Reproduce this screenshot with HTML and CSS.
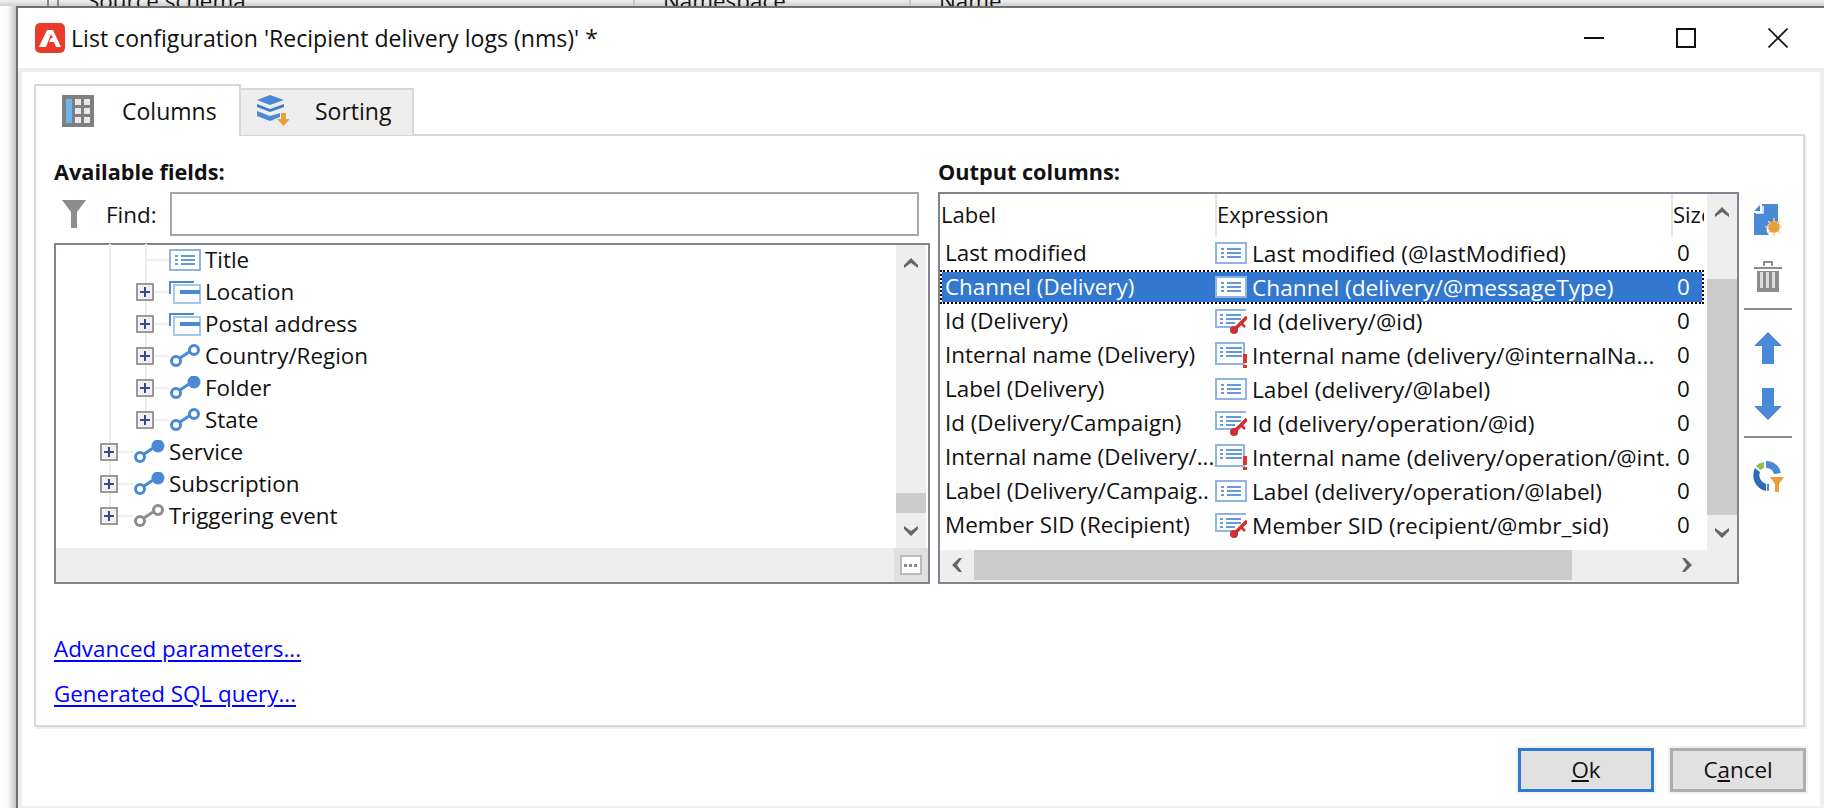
FILE: index.html
```html
<!DOCTYPE html>
<html lang="en">
<head>
  <meta charset="UTF-8">
  <title>List configuration</title>
  <link rel="stylesheet" href="styles.css">
</head>
<body>

  <svg class="defs" width="0" height="0">
    <symbol id="i-attr" viewBox="0 0 32 24">
      <rect x="1" y="2" width="30" height="20" fill="#fff" stroke="#8fb5e3" stroke-width="2"/>
      <path d="M6 8h3M12 8h14M6 12h3M12 12h14M6 16h3M12 16h14" stroke="#4a89d6" stroke-width="2" opacity=".85"/>
    </symbol>
    <symbol id="i-key" viewBox="0 0 32 26">
      <path d="M31 2H1v17h17" fill="none" stroke="#8fb5e3" stroke-width="2"/>
      <path d="M5 7h3M11 7h15M5 11h3M11 11h15M5 15h3M11 15h9" stroke="#4a89d6" stroke-width="2" opacity=".85"/>
      <path d="M32 9 20 21" stroke="#cf2f2f" stroke-width="3.500"/>
      <circle cx="19" cy="22" r="4" fill="#cf2f2f"/>
      <path d="M26 15l4 4" stroke="#cf2f2f" stroke-width="2.500"/>
    </symbol>
    <symbol id="i-warn" viewBox="0 0 32 26">
      <path d="M1 1h28v21H1z" fill="#fff" stroke="#8fb5e3" stroke-width="2"/>
      <path d="M5 6h3M11 6h16M5 10h3M11 10h16M5 14h3M11 14h16" stroke="#4a89d6" stroke-width="2" opacity=".85"/>
      <path d="M28 12h4v9h-4zM28 23h4v3h-4z" fill="#e0342c"/>
    </symbol>
    <symbol id="i-node" viewBox="0 0 32 24">
      <path d="M1 14V2h24" fill="none" stroke="#4a89d6" stroke-width="2"/>
      <rect x="5" y="5" width="26" height="18" fill="#fff" stroke="#a9c6ea" stroke-width="2"/>
      <path d="M11 12h20" stroke="#4a89d6" stroke-width="4"/>
    </symbol>
    <symbol id="i-link" viewBox="0 0 32 24">
      <circle cx="7" cy="17" r="4.500" fill="none" stroke="currentColor" stroke-width="3"/>
      <path d="M11 14l9-6" stroke="currentColor" stroke-width="3"/>
      <circle cx="25" cy="6" r="4.500" fill="none" stroke="currentColor" stroke-width="3"/>
    </symbol>
    <symbol id="i-link-full" viewBox="0 0 32 24">
      <circle cx="7" cy="17" r="4.500" fill="none" stroke="currentColor" stroke-width="3"/>
      <path d="M11 14l9-6" stroke="currentColor" stroke-width="3"/>
      <circle cx="25" cy="6" r="6.500" fill="currentColor"/>
    </symbol>
    <symbol id="i-plus" viewBox="0 0 18 18">
      <rect x="1" y="1" width="16" height="16" fill="#f1f1f1" stroke="#9a9a9a" stroke-width="2"/>
      <path d="M4 9h10M9 4v10" stroke="#34478a" stroke-width="2"/>
    </symbol>
    <symbol id="i-up" viewBox="0 0 14 12">
      <path d="M0 8 7 1l7 7v3l-7-5-7 5z" fill="#666"/>
    </symbol>
    <symbol id="i-down" viewBox="0 0 14 12">
      <path d="M0 1v3l7 7 7-7V1L7 6z" fill="#666"/>
    </symbol>
    <symbol id="i-left" viewBox="0 0 12 14">
      <path d="M8 0 1 7l7 7h3L6 7l5-7z" fill="#666"/>
    </symbol>
    <symbol id="i-right" viewBox="0 0 12 14">
      <path d="M1 0l5 7-5 7h3l7-7-7-7z" fill="#666"/>
    </symbol>
  </svg>

  <div class="behind">
    <span class="behind-cell narrow"></span>
    <span class="behind-cell source">Source schema</span>
    <span class="behind-cell space">Namespace</span>
    <span class="behind-cell last">Name</span>
  </div>

  <div class="dialog">
    <div class="titlebar">
      <svg class="logo" width="30" height="30" viewBox="0 0 30 30">
        <rect width="30" height="30" rx="5" fill="#e93a2a"/>
        <path d="M12 7h6l8 17h-5l-2-5h-5l2-4h2l-2-4-5 13H4z" fill="#fff"/>
      </svg>
      <span class="title">List configuration 'Recipient delivery logs (nms)' *</span>
      <div class="controls">
        <span class="control"><svg width="20" height="20" viewBox="0 0 20 20"><path d="M0 10h20" stroke="#111" stroke-width="2"/></svg></span>
        <span class="control"><svg width="20" height="20" viewBox="0 0 20 20"><rect x="1" y="1" width="18" height="18" fill="none" stroke="#111" stroke-width="2"/></svg></span>
        <span class="control"><svg width="20" height="20" viewBox="0 0 20 20"><path d="M.5.5l19 19M19.500.5l-19 19" stroke="#111" stroke-width="1.600"/></svg></span>
      </div>
    </div>

    <div class="dialog-body">
      <div class="tabs">
        <div class="tab active">
          <svg width="32" height="32" viewBox="0 0 32 32">
            <rect width="32" height="32" fill="#7f7f7f"/>
            <rect x="4" y="4" width="6" height="24" fill="#66b7ee"/>
            <path d="M13 4h6v6h-6zM22 4h6v6h-6zM13 13h6v6h-6zM22 13h6v6h-6zM13 22h6v6h-6zM22 22h6v6h-6z" fill="#e8e8e8"/>
          </svg>
          <span>Columns</span>
        </div>
        <div class="tab">
          <svg width="32" height="32" viewBox="0 0 32 32">
            <path d="M13 0l14 5-14 5L0 5z" fill="#4a89d6"/>
            <path d="M0 9l13 5 14-5v3l-14 5-13-5z" fill="#3d7cc9"/>
            <path d="M0 16l13 5 10-3v4l-10 4-13-5z" fill="#4a89d6"/>
            <path d="M24 18h5v6h4l-6.500 7L20 24h4z" fill="#e8a03c"/>
          </svg>
          <span>Sorting</span>
        </div>
      </div>

      <div class="pane">
        <div class="columns">
          <div class="fields">
            <div class="group-label">Available fields:</div>
            <div class="find-row">
              <svg width="24" height="28" viewBox="0 0 24 28"><path d="M0 0h24L15 12v16H9V12z" fill="#8c8c8c"/></svg>
              <label class="find-label">Find:</label>
              <div class="find-input"></div>
            </div>
            <div class="tree">
              <div class="tree-main">
                <div class="tree-rows">
                  <div class="tree-row lvl2 no-exp"><i class="stub"></i><svg class="node-icon"><use href="#i-attr"/></svg>Title</div>
                  <div class="tree-row lvl2"><svg class="plus"><use href="#i-plus"/></svg><i class="stub"></i><svg class="node-icon"><use href="#i-node"/></svg>Location</div>
                  <div class="tree-row lvl2"><svg class="plus"><use href="#i-plus"/></svg><i class="stub"></i><svg class="node-icon"><use href="#i-node"/></svg>Postal address</div>
                  <div class="tree-row lvl2"><svg class="plus"><use href="#i-plus"/></svg><i class="stub"></i><svg class="node-icon blue"><use href="#i-link"/></svg>Country/Region</div>
                  <div class="tree-row lvl2"><svg class="plus"><use href="#i-plus"/></svg><i class="stub"></i><svg class="node-icon blue"><use href="#i-link-full"/></svg>Folder</div>
                  <div class="tree-row lvl2 end"><svg class="plus"><use href="#i-plus"/></svg><i class="stub"></i><svg class="node-icon blue"><use href="#i-link"/></svg>State</div>
                  <div class="tree-row lvl1"><svg class="plus"><use href="#i-plus"/></svg><i class="stub"></i><svg class="node-icon blue"><use href="#i-link-full"/></svg>Service</div>
                  <div class="tree-row lvl1"><svg class="plus"><use href="#i-plus"/></svg><i class="stub"></i><svg class="node-icon blue"><use href="#i-link-full"/></svg>Subscription</div>
                  <div class="tree-row lvl1 end"><svg class="plus"><use href="#i-plus"/></svg><i class="stub"></i><svg class="node-icon gray"><use href="#i-link"/></svg>Triggering event</div>
                </div>
                <div class="vscroll tree-scroll">
                  <span class="arrow-cell"><svg width="14" height="12"><use href="#i-up"/></svg></span>
                  <div class="track end"><div class="thumb tree-thumb"></div></div>
                  <span class="arrow-cell"><svg width="14" height="12"><use href="#i-down"/></svg></span>
                </div>
              </div>
              <div class="tree-foot">
                <div class="corner"><span class="corner-box"></span></div>
              </div>
            </div>
          </div>

          <div class="outputs">
            <div class="group-label">Output columns:</div>
            <div class="grid-box">
              <div class="grid-main">
                <div class="grid-table">
                  <div class="grid-head">
                    <span class="hcell">Label</span>
                    <span class="hcell">Expression</span>
                    <span class="hcell clip">Size</span>
                  </div>
                  <div class="grid-row"><span class="c-label">Last modified</span><span class="c-expr"><svg class="row-icon"><use href="#i-attr"/></svg>Last modified (@lastModified)</span><span class="c-size">0</span></div>
                  <div class="grid-row selected"><span class="c-label">Channel (Delivery)</span><span class="c-expr"><svg class="row-icon"><use href="#i-attr"/></svg>Channel (delivery/@messageType)</span><span class="c-size">0</span></div>
                  <div class="grid-row"><span class="c-label">Id (Delivery)</span><span class="c-expr"><svg class="row-icon"><use href="#i-key"/></svg>Id (delivery/@id)</span><span class="c-size">0</span></div>
                  <div class="grid-row"><span class="c-label">Internal name (Delivery)</span><span class="c-expr"><svg class="row-icon"><use href="#i-warn"/></svg>Internal name (delivery/@internalNa...</span><span class="c-size">0</span></div>
                  <div class="grid-row"><span class="c-label">Label (Delivery)</span><span class="c-expr"><svg class="row-icon"><use href="#i-attr"/></svg>Label (delivery/@label)</span><span class="c-size">0</span></div>
                  <div class="grid-row"><span class="c-label">Id (Delivery/Campaign)</span><span class="c-expr"><svg class="row-icon"><use href="#i-key"/></svg>Id (delivery/operation/@id)</span><span class="c-size">0</span></div>
                  <div class="grid-row"><span class="c-label">Internal name (Delivery/...</span><span class="c-expr"><svg class="row-icon"><use href="#i-warn"/></svg>Internal name (delivery/operation/@int.</span><span class="c-size">0</span></div>
                  <div class="grid-row"><span class="c-label">Label (Delivery/Campaig..</span><span class="c-expr"><svg class="row-icon"><use href="#i-attr"/></svg>Label (delivery/operation/@label)</span><span class="c-size">0</span></div>
                  <div class="grid-row"><span class="c-label">Member SID (Recipient)</span><span class="c-expr"><svg class="row-icon"><use href="#i-key"/></svg>Member SID (recipient/@mbr_sid)</span><span class="c-size">0</span></div>
                </div>
                <div class="vscroll grid-scroll">
                  <span class="arrow-cell"><svg width="14" height="12"><use href="#i-up"/></svg></span>
                  <div class="track"><div class="thumb grid-vthumb"></div></div>
                  <span class="arrow-cell"><svg width="14" height="12"><use href="#i-down"/></svg></span>
                </div>
              </div>
              <div class="hscroll">
                <span class="arrow-cell"><svg width="12" height="14"><use href="#i-left"/></svg></span>
                <div class="hthumb"></div>
                <div class="hrest"></div>
                <span class="arrow-cell"><svg width="12" height="14"><use href="#i-right"/></svg></span>
              </div>
            </div>
          </div>

          <div class="toolbar">
            <svg width="28" height="32" viewBox="0 0 28 32">
              <path d="M8 0h16v18a8 8 0 0 0-9 13H0V9h8zM6 1v6H0z" fill="#4a89d6"/>
              <path d="M2 9h7V2" fill="none" stroke="#fff" stroke-width="1.500"/>
              <circle cx="20" cy="23" r="6" fill="#e8a03c"/>
              <path d="M20 14v18M11 23h18M14 17l12 12M26 17 14 29" stroke="#f3cb93" stroke-width="1.500"/>
              <circle cx="20" cy="23" r="5" fill="#e8a03c"/>
            </svg>
            <svg class="tool-trash" width="28" height="32" viewBox="0 0 28 32">
              <path d="M0 7h28v2H0zM9 6V2q0-1 1-1h8q1 0 1 1v4h-2V3h-6v3z" fill="#8c8c8c"/>
              <path d="M3 11h22v21H3z" fill="#8c8c8c"/>
              <path d="M6 12h3v16H6zM12 12h3v16h-3zM18 12h3v16h-3z" fill="#dcdcdc"/>
            </svg>
            <hr class="tool-sep">
            <svg width="28" height="32" viewBox="0 0 28 32"><path d="M14 0l14 14h-8v18H8V14H0z" fill="#4a89d6"/></svg>
            <svg class="tool-down" width="28" height="32" viewBox="0 0 28 32"><path d="M8 0h12v18h8L14 32 0 18h8z" fill="#4a89d6"/></svg>
            <hr class="tool-sep">
            <svg width="34" height="32" viewBox="0 0 34 32">
              <path d="M15 1a15 15 0 0 1 15 12l-7 1a8 8 0 0 0-8-6z" fill="#4a89d6"/>
              <path d="M13 2v6q-2 1-4 2L5 6q3-3 8-4z" fill="#8dbf4d"/>
              <path d="M4 8l5 4a9 9 0 0 0 6 12v7A16 16 0 0 1 4 8z" fill="#2f6db3"/>
              <path d="M18 24v7h-2v-7z" fill="#4a89d6"/>
              <path d="M19 17h14l-5 7v8h-4v-8z" fill="#e8a03c"/>
            </svg>
          </div>
        </div>

        <div class="links">
          <a href="#" class="link">Advanced parameters...</a>
          <a href="#" class="link">Generated SQL query...</a>
        </div>
      </div>

      <div class="buttons">
        <button class="btn default"><u>O</u>k</button>
        <button class="btn">C<u>a</u>ncel</button>
      </div>
    </div>
  </div>

</body>
</html>
```

FILE: styles.css
```css
html, body {
  margin: 0;
  height: 808px;
  overflow: hidden;
}
body {
  font-family: 'Open Sans', 'Noto Sans', sans-serif;
  font-size: 22.4px;
  color: #111;
  background: linear-gradient(to right, #fff, #fafafa 50%, #c4c4c4);
  background-size: 16px 100%;
  background-repeat: no-repeat;
}
.defs {
  display: block;
}
/* window behind the dialog, only its bottom edge shows */
.behind {
  height: 6px;
  padding-left: 47px;
  display: flex;
  overflow: hidden;
  background: linear-gradient(#efefef, #d0d0d0);
}
.behind-cell {
  display: flex;
  align-items: flex-end;
  flex-shrink: 0;
  height: 6px;
  padding-left: 28px;
  box-sizing: border-box;
  line-height: 10px;
  white-space: nowrap;
  border-left: 2px solid #c8c8c8;
}
.behind-cell.narrow {
  width: 10px;
  padding: 0;
  border-left-color: #888;
}
.behind-cell.source {
  width: 576px;
  border-left-color: #888;
}
.behind-cell.space {
  width: 276px;
}
.behind-cell.last {
  width: 200px;
}

.dialog {
  margin-left: 16px;
  height: 802px;
  background: #fff;
  border-top: 2px solid #707070;
  border-left: 2px solid #707070;
  box-sizing: border-box;
  display: flex;
  flex-direction: column;
}
.titlebar {
  height: 60px;
  display: flex;
  align-items: center;
  padding-left: 17px;
  flex-shrink: 0;
}
.logo {
  margin-right: 6px;
}
.title {
  flex: 1;
  font-size: 23.1px;
}
.controls {
  display: flex;
}
.control {
  width: 92px;
  display: flex;
  justify-content: center;
}

.dialog-body {
  flex: 1;
  background: #fff;
  border: 4px solid #eee;
  border-bottom-width: 2px;
  padding: 12px 12px 0;
  min-height: 0;
}
.tabs {
  display: flex;
  align-items: flex-end;
  height: 51px;
  margin-bottom: -1px;
  font-size: 23px;
}
.tab {
  display: flex;
  align-items: center;
  gap: 26px;
  width: 173px;
  height: 47px;
  padding: 0 0 4px 16px;
  box-sizing: border-box;
  background: #eee;
  border: 2px solid #d8d8d8;
  border-left: none;
  border-bottom: none;
}
.tab.active {
  position: relative;
  height: 52px;
  width: 207px;
  margin-bottom: -1px;
  padding: 0 0 0 26px;
  gap: 28px;
  background: #fff;
  border-left: 2px solid #d8d8d8;
}
.pane {
  height: 593px;
  margin-right: 3px;
  box-sizing: border-box;
  border: 2px solid #d8d8d8;
  box-shadow: 2px 2px 0 #f0f0f0;
  padding: 24px 0 0 18px;
}
.columns {
  display: flex;
}
.group-label {
  font-weight: 700;
  font-size: 21.7px;
  height: 24px;
  line-height: 24px;
  margin-bottom: 8px;
  white-space: nowrap;
}

.fields {
  width: 876px;
  margin-right: 8px;
}
.find-row {
  display: flex;
  align-items: center;
  height: 44px;
  margin-bottom: 7px;
  padding-left: 8px;
}
.find-label {
  margin: 0 14px 0 20px;
  width: 50px;
}
.find-input {
  flex: 1;
  height: 44px;
  margin-right: 11px;
  box-sizing: border-box;
  background: #fff;
  border: 2px solid #a6a6a6;
}
.tree {
  height: 341px;
  box-sizing: border-box;
  border: 2px solid #80848f;
  display: flex;
  flex-direction: column;
}
.tree-main {
  flex: 1;
  display: flex;
  min-height: 0;
}
.tree-rows {
  flex: 1;
  margin-top: -1px;
}
.tree-row {
  height: 32px;
  box-sizing: border-box;
  padding-bottom: 2px;
  display: flex;
  align-items: center;
  white-space: nowrap;
  background-repeat: no-repeat;
}
.tree-row svg.plus {
  width: 18px;
  height: 18px;
  margin-top: 2px;
}
.stub {
  width: 15px;
  height: 2px;
  margin-top: 2px;
  background: #eee;
}
.node-icon {
  width: 32px;
  height: 24px;
  margin: 2px 4px 0 0;
}
.blue {
  color: #4a89d6;
}
.gray {
  color: #8c8c8c;
}
.lvl2 {
  padding-left: 80px;
  background-image: linear-gradient(#eee, #eee), linear-gradient(#eee, #eee);
  background-position: 53px 0, 89px 0;
  background-size: 2px 100%, 2px 100%;
}
.lvl2.no-exp {
  padding-left: 89px;
}
.lvl2.no-exp .stub {
  width: 24px;
}
.lvl2.end {
  background-size: 2px 100%, 2px 50%;
}
.lvl1 {
  padding-left: 44px;
  background-image: linear-gradient(#eee, #eee);
  background-position: 53px 0;
  background-size: 2px 100%;
}
.lvl1.end {
  background-size: 2px 50%;
}

.vscroll {
  display: flex;
  flex-direction: column;
  background: #eee;
  flex-shrink: 0;
  width: 30px;
}
.tree-scroll {
  margin-right: 2px;
}
.arrow-cell {
  display: flex;
  align-items: center;
  justify-content: center;
  height: 35px;
  flex-shrink: 0;
}
.track {
  flex: 1;
  display: flex;
  flex-direction: column;
}
.track.end {
  justify-content: flex-end;
}
.thumb {
  background: #ccc;
}
.tree-thumb {
  height: 20px;
}
.grid-vthumb {
  margin-top: 50px;
  height: 236px;
}
.tree-foot {
  height: 34px;
  background: #eee;
  display: flex;
  justify-content: flex-end;
  flex-shrink: 0;
}
.corner {
  width: 34px;
  background: #e0e0e0;
  display: flex;
  align-items: center;
  justify-content: center;
}
.corner-box {
  width: 22px;
  height: 20px;
  box-sizing: border-box;
  border: 2px solid #bbb;
  background: repeating-linear-gradient(90deg, #8a8a8a 0 3px, #fff 3px 5px) center/14px 3px no-repeat, #fff;
}

.outputs {
  width: 801px;
}
.grid-box {
  height: 392px;
  box-sizing: border-box;
  border: 2px solid #80848f;
  display: flex;
  flex-direction: column;
}
.grid-main {
  flex: 1;
  display: flex;
  min-height: 0;
}
.grid-table {
  flex: 1;
  min-width: 0;
}
.grid-head, .grid-row {
  display: grid;
  grid-template-columns: 275px 456px 33px;
}
.grid-head {
  height: 42px;
  line-height: 40px;
  width: 764px;
  font-size: 22px;
}
.hcell {
  overflow: hidden;
  white-space: nowrap;
  border-left: 2px solid #e4e4e4;
}
.hcell:first-child {
  border-left: 1px solid transparent;
}
.grid-row {
  height: 34px;
  line-height: 33px;
  width: 764px;
  white-space: nowrap;
}
.c-label {
  padding-left: 5px;
  overflow: hidden;
}
.c-expr {
  display: flex;
  align-items: center;
  overflow: hidden;
  font-size: 22.7px;
}
.row-icon {
  width: 32px;
  height: 26px;
  margin-right: 5px;
  flex-shrink: 0;
}
.c-size {
  padding-left: 6px;
}
.grid-row.selected {
  color: #fff;
  line-height: 29px;
  background: #3278d0;
  background-clip: padding-box;
  border: 2px dotted #000;
  box-sizing: border-box;
  grid-template-columns: 273px 456px 31px;
}
.selected .c-label {
  padding-left: 3px;
}
.hscroll {
  height: 32px;
  display: flex;
  background: #eee;
  flex-shrink: 0;
}
.hscroll .arrow-cell {
  width: 34px;
  height: 30px;
}
.hscroll .arrow-cell:last-child {
  margin-right: 33px;
}
.hthumb {
  width: 598px;
  height: 30px;
  background: #ccc;
}
.hrest {
  flex: 1;
}

.toolbar {
  width: 48px;
  margin-left: 5px;
  padding-top: 44px;
  display: flex;
  flex-direction: column;
  align-items: center;
}
.tool-trash, .tool-down {
  margin-top: 24px;
}
.tool-sep {
  width: 48px;
  height: 2px;
  margin: 16px 0 22px;
  border: none;
  background: #8c8c8c;
}

.links {
  margin-top: 53px;
  display: flex;
  flex-direction: column;
  align-items: flex-start;
  gap: 21px;
}
.link {
  color: #0000ff;
  height: 24px;
  line-height: 24px;
  text-underline-offset: 3px;
  text-decoration-thickness: 2px;
}

.buttons {
  display: flex;
  justify-content: flex-end;
  gap: 16px;
  padding: 21px 2px 0 0;
}
.btn {
  width: 136px;
  height: 44px;
  font: inherit;
  line-height: 1;
  color: #111;
  background: #e1e1e1;
  border: 3px solid #adadad;
  box-shadow: 0 0 0 2px #f2f2f2;
  padding: 0;
}
.btn.default {
  border-color: #3079d0;
}
```
